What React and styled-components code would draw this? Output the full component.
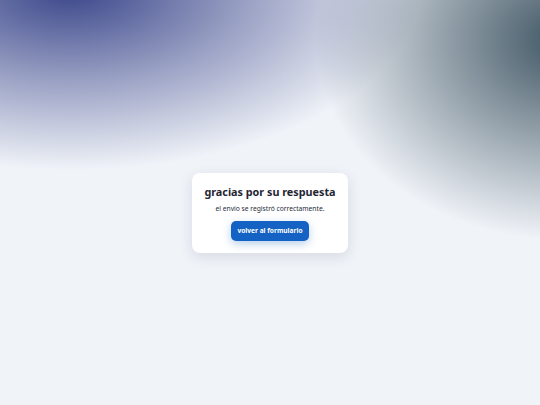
import React from 'react';
import styled, { createGlobalStyle } from 'styled-components';

const GlobalStyle = createGlobalStyle`
  html, body, #root {
    margin: 0;
    padding: 0;
    height: 100%;
  }
  body {
    font-family: "Noto Sans", "Open Sans", sans-serif;
    background: #f0f3f8;
  }
`;

const Page = styled.div`
  box-sizing: border-box;
  min-height: 100vh;
  padding-top: 20px;
  display: flex;
  align-items: center;
  justify-content: center;
  background:
    radial-gradient(ellipse 350px 180px at 70px -10px, rgba(58, 70, 138, 1), rgba(58, 70, 138, 0.5) 48%, rgba(58, 70, 138, 0) 100%),
    radial-gradient(ellipse 250px 200px at 565px 40px, rgba(62, 84, 98, 1), rgba(62, 84, 98, 0.5) 50%, rgba(62, 84, 98, 0) 100%),
    #f0f3f8;
`;

const Card = styled.div`
  background: #ffffff;
  border-radius: 8px;
  box-shadow: 0 4px 14px rgba(30, 40, 70, 0.12);
  padding: 12px;
  display: flex;
  flex-direction: column;
  align-items: center;
  text-align: center;
`;

const Title = styled.h1`
  margin: 0;
  font-size: 10.8px;
  line-height: 14px;
  font-weight: 700;
  color: #1f2633;
`;

const Message = styled.p`
  margin: 5px 0 8px;
  font-size: 6.7px;
  line-height: 9px;
  color: #262c38;
`;

const Button = styled.button`
  font-family: inherit;
  font-size: 6.6px;
  line-height: 9px;
  font-weight: 700;
  color: #ffffff;
  background: #1463c4;
  border: none;
  border-radius: 5px;
  padding: 5.5px 6px;
  box-shadow: 0 3px 8px rgba(20, 99, 196, 0.3);
  cursor: pointer;
`;

export default function App() {
  return (
    <>
      <GlobalStyle />
      <Page>
        <Card>
          <Title>gracias por su respuesta</Title>
          <Message>el envio se registró correctamente.</Message>
          <Button>volver al formulario</Button>
        </Card>
      </Page>
    </>
  );
}
